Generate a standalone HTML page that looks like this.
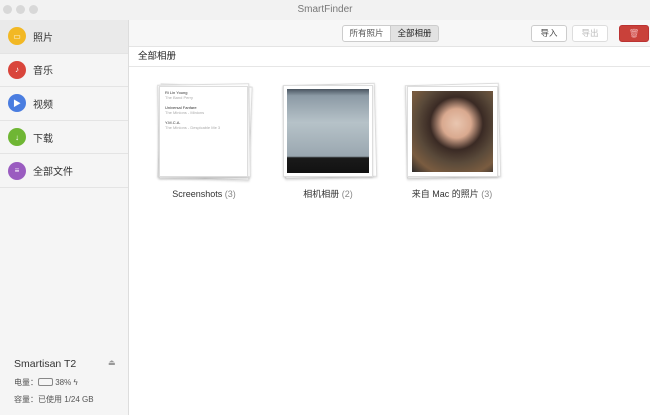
<!DOCTYPE html>
<html><head><meta charset="utf-8"><style>
*{margin:0;padding:0;box-sizing:border-box}
body{width:650px;height:415px;overflow:hidden;background:#fff;font-family:"Liberation Sans","Noto Sans CJK SC",sans-serif;position:relative}
.title{position:absolute;left:0;top:0;width:650px;height:20px;background:#f2f2f2;text-align:center;font-size:10px;color:#777;line-height:20px}
.dot{position:absolute;top:5px;width:9px;height:9px;border-radius:50%;background:#d8d8d8}
.side{position:absolute;left:0;top:20px;width:129px;height:395px;background:#f5f5f5;border-right:1px solid #ddd}
.item{height:33.6px;border-bottom:1px solid #e4e4e4;display:flex;align-items:center;font-size:10px;color:#333}
.item.sel{background:#eaeaea}
.ic{width:18px;height:18px;border-radius:50%;margin:0 7px 0 8px;display:flex;align-items:center;justify-content:center;color:#fff;font-size:8px}
.tb{position:absolute;left:129px;top:20px;right:0;height:27px;background:#f7f7f7;border-bottom:1px solid #e4e4e4}
.hdr{position:absolute;left:129px;top:47px;right:0;height:20px;border-bottom:1px solid #e6e6e6;font-size:9.5px;color:#222;line-height:20px;padding-left:9px;background:#fff}
.btn{position:absolute;top:5px;height:17px;border:1px solid #ccc;border-radius:3px;background:#fff;font-size:8.5px;line-height:15px;text-align:center;color:#444}
.stack{position:absolute}
.pg{position:absolute;background:#fff;border:1px solid #ddd;box-shadow:0 1px 2px rgba(0,0,0,.15)}
.lbl{position:absolute;top:189px;font-size:9px;line-height:11px;color:#333;text-align:center;width:120px}
.lbl span{color:#888}
</style></head><body>
<div class="title">SmartFinder<div class="dot" style="left:3px"></div><div class="dot" style="left:16px"></div><div class="dot" style="left:29px"></div></div>
<div class="side">
<div class="item sel"><div class="ic" style="background:#f2b824">▭</div>照片</div>
<div class="item"><div class="ic" style="background:#d9453b">♪</div>音乐</div>
<div class="item"><div class="ic" style="background:#4a7de0">▶</div>视频</div>
<div class="item"><div class="ic" style="background:#6fb634">↓</div>下载</div>
<div class="item"><div class="ic" style="background:#9a5cc0">≡</div>全部文件</div>
<div style="position:absolute;left:14px;top:338px;font-size:10.5px;color:#333">Smartisan T2</div>
<div style="position:absolute;left:108px;top:338px;font-size:8px;color:#999">⏏</div>
<div style="position:absolute;left:14px;top:357px;font-size:8px;color:#555">电量：<span style="display:inline-block;width:15px;height:8px;border:1px solid #888;border-radius:2px;vertical-align:-1px"></span> 38% ϟ</div>
<div style="position:absolute;left:14px;top:374px;font-size:8px;color:#555">容量：已使用 1/24 GB</div>
</div>
<div class="tb">
<div class="btn" style="left:213px;width:49px;border-radius:3px 0 0 3px;color:#555">所有照片</div>
<div class="btn" style="left:261px;width:49px;border-radius:0 3px 3px 0;background:#e2e2e2;color:#222">全部相册</div>
<div class="btn" style="left:402px;width:36px">导入</div>
<div class="btn" style="left:443px;width:36px;color:#bbb;border-color:#ddd">导出</div>
<div class="btn" style="left:490px;width:30px;background:#c9413a;border-color:#b33;color:#eaa">🗑</div>
</div>
<div class="hdr">全部相册</div>

<div class="stack" style="left:157px;top:83px">
<div class="pg" style="left:2px;top:2px;width:92px;height:94px;transform:rotate(2deg)"></div>
<div class="pg" style="left:1px;top:1px;width:92px;height:94px;transform:rotate(-1deg)"></div>
<div class="pg" style="left:2px;top:3px;width:89px;height:91px;padding:3px 5px;font-size:4px;color:#333;line-height:5px">Ri Lin Young<br><span style="color:#aaa">The Band Perry</span><br><br>Universal Fanfare<br><span style="color:#aaa">The Minions - Minions</span><br><br>Y.M.C.A.<br><span style="color:#aaa">The Minions - Despicable Me 3</span></div>
</div>
<div class="stack" style="left:283px;top:83px">
<div class="pg" style="left:1px;top:1px;width:92px;height:94px;transform:rotate(-1.5deg)"></div>
<div class="pg" style="left:0;top:2px;width:90px;height:92px;padding:3px"><div style="width:100%;height:100%;background:linear-gradient(#4a5560 0,#8c9aa5 8%,#b6c2c8 40%,#9aa7b0 80%,#1a1a1a 82%,#111 100%)"></div></div>
</div>
<div class="stack" style="left:405px;top:83px">
<div class="pg" style="left:1px;top:1px;width:94px;height:94px;transform:rotate(-1.5deg)"></div>
<div class="pg" style="left:2px;top:3px;width:91px;height:91px;padding:4px"><div style="width:100%;height:100%;background:radial-gradient(circle at 55% 40%,#e9c6b0 0,#d9a98f 22%,#3a2a24 40%,#5a4a3a 60%,#7a5c40 80%,#2c2a2a 100%)"></div></div>
</div>
<div class="lbl" style="left:144px">Screenshots <span>(3)</span></div>
<div class="lbl" style="left:268px">相机相册 <span>(2)</span></div>
<div class="lbl" style="left:392px">来自 Mac 的照片 <span>(3)</span></div>
</body></html>
